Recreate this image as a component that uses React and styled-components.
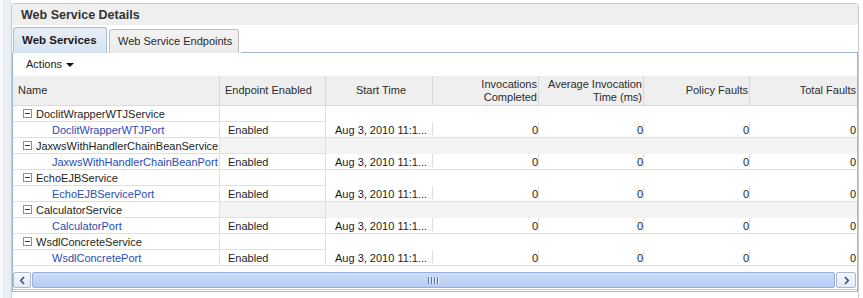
import React from 'react';
import styled, { createGlobalStyle } from 'styled-components';

const Global = createGlobalStyle`
  *, *::before, *::after { box-sizing: border-box; }
  html, body { margin: 0; padding: 0; background: #fff; }
  body {
    font-family: "Liberation Sans", Arial, sans-serif;
    font-size: 11px;
    color: #1d1d1d;
  }
  #root { height: 298px; }
`;

const dots = `repeating-conic-gradient(#ebebeb 0 25%, #f3f3f3 0 50%) 0 0 / 2px 2px`;
const bandDots = `repeating-conic-gradient(#efefef 0 25%, #f8f8f8 0 50%) 0 0 / 2px 2px`;

const Page = styled.div`
  display: flex;
  width: 863px;
  height: 298px;
  overflow: hidden;
`;

const SideStrip = styled.div`
  flex: none;
  width: 11px;
  border-left: 3px solid #f7f8fb;
  background: #e9edf4;
`;

const Panel = styled.div`
  flex: none;
  width: 848px;
  margin-top: 3px;
  display: flex;
  flex-direction: column;
  border: 1px solid #c9c9c9;
  border-bottom: none;
  border-radius: 4px 4px 0 0;
`;

const PanelHeader = styled.div`
  height: 21px;
  padding-left: 9px;
  display: flex;
  align-items: center;
  background: ${dots};
  border-radius: 3px 3px 0 0;
  font-size: 12.5px;
  font-weight: bold;
  color: #333;
`;

const TabBar = styled.div`
  margin-top: 2px;
  height: 26px;
  display: flex;
  align-items: flex-end;
  padding-left: 1px;
  gap: 2px;
`;

const Tab = styled.div`
  height: ${(p) => (p.$active ? 26 : 24)}px;
  width: ${(p) => p.$w}px;
  display: flex;
  align-items: center;
  padding-left: 8px;
  padding-bottom: 1px;
  border: 1px solid ${(p) => (p.$active ? '#a6bdd7' : '#bfbfbf')};
  border-bottom: none;
  border-radius: 3px 3px 0 0;
  background: ${(p) =>
    p.$active
      ? 'linear-gradient(#e8eff8, #d6e3f1)'
      : 'linear-gradient(#f3f3f3, #ebebeb)'};
  font-size: ${(p) => (p.$active ? '11.5px' : '11px')};
  font-weight: ${(p) => (p.$active ? 'bold' : 'normal')};
  color: ${(p) => (p.$active ? '#1a1a1a' : '#2a2a2a')};
  white-space: nowrap;
`;

const TabFiller = styled.div`
  flex: 1;
  height: 1px;
  background: #9fb7d0;
`;

const TabBody = styled.div`
  display: flex;
  flex-direction: column;
  border: 1px solid #9fb7d0;
  border-top: none;
`;

const Toolbar = styled.div`
  height: 23px;
  display: flex;
  align-items: center;
  padding-left: 13px;
  padding-bottom: 2px;
  gap: 4px;
  color: #1d1d1d;
`;

const Caret = styled.span`
  width: 0;
  height: 0;
  margin-top: 3px;
  border-left: 4px solid transparent;
  border-right: 4px solid transparent;
  border-top: 4px solid #111;
`;

const COLS = '207px 106px 107px 106px 105px 106px 1fr';

const HeaderRow = styled.div`
  display: grid;
  grid-template-columns: ${COLS};
  height: 30px;
  background: ${dots};
  border-bottom: 1px solid #dadada;
`;

const HeadCell = styled.div`
  display: flex;
  align-items: center;
  justify-content: ${(p) =>
    p.$align === 'right' ? 'flex-end' : p.$align === 'center' ? 'center' : 'flex-start'};
  text-align: ${(p) => p.$align || 'left'};
  padding: 0 1px 0 5px;
  border-right: ${(p) => (p.$last ? 'none' : '1px solid #d8d8d8')};
  line-height: 13px;
  color: #2b2b2b;
`;

const Row = styled.div`
  display: grid;
  grid-template-columns: ${COLS};
  height: 16px;
`;

const Cell = styled.div`
  display: flex;
  align-items: center;
  justify-content: ${(p) => (p.$align === 'right' ? 'flex-end' : 'flex-start')};
  padding: 0 ${(p) => (p.$align === 'right' ? 1 : 0)}px 0 ${(p) => p.$pl || 0}px;
  white-space: nowrap;
  overflow: hidden;
  color: ${(p) => (p.$link ? '#2a4db4' : '#1d1d1d')};
  background: ${(p) => (p.$band ? bandDots : '#fff')};
  border-right: ${(p) => (p.$vline ? '1px solid #e0e0e0' : 'none')};
  border-bottom: ${(p) => (p.$hline ? '1px solid #e0e0e0' : '1px solid transparent')};
  ${(p) =>
    p.$tick
      ? `background-image: linear-gradient(#dedede, #dedede);
         background-repeat: no-repeat;
         background-size: 1px 13px;
         background-position: right top;`
      : ''}
`;

const NameWrap = styled.span`
  display: flex;
  align-items: center;
  gap: 4px;
`;

const ScrollArea = styled.div`
  padding-top: 6px;
  padding-bottom: 1px;
  border-bottom: 1px solid #b3c6e2;
  margin-bottom: 1px;
`;

const ScrollBar = styled.div`
  height: 16px;
  display: flex;
  gap: 1px;
  padding: 0 1px 0 0;
`;

const ScrollButton = styled.div`
  flex: none;
  width: ${(p) => p.$w}px;
  height: 16px;
  display: flex;
  align-items: center;
  justify-content: center;
  border: 1px solid #a8b8d5;
  border-radius: 2px;
  background: linear-gradient(#f6f8fd, #e3eaf7);
`;

const Thumb = styled.div`
  flex: 1;
  height: 16px;
  display: flex;
  align-items: center;
  justify-content: center;
  gap: 1px;
  border: 1px solid #95afdf;
  border-radius: 2px;
  background: linear-gradient(#cddcf9, #b6cdf5);
`;

const Grip = styled.span`
  width: 1px;
  height: 7px;
  background: #5f79ac;
  box-shadow: 1px 0 0 #e8effc;
  margin-right: 1px;
`;

const MinusBox = () => (
  <svg width="9" height="9" viewBox="0 0 9 9">
    <rect x="0.5" y="0.5" width="8" height="8" fill="#fff" stroke="#8e8e8e" />
    <line x1="2" y1="4.5" x2="7" y2="4.5" stroke="#333" />
  </svg>
);

const Chevron = ({ dir }) => (
  <svg width="7" height="9" viewBox="0 0 7 9">
    <polyline
      points={dir === 'left' ? '5,1 1.8,4.5 5,8' : '2,1 5.2,4.5 2,8'}
      fill="none"
      stroke="#3f5a8c"
      strokeWidth="1.8"
    />
  </svg>
);

const services = [
  ['DoclitWrapperWTJService', 'DoclitWrapperWTJPort'],
  ['JaxwsWithHandlerChainBeanService', 'JaxwsWithHandlerChainBeanPort'],
  ['EchoEJBService', 'EchoEJBServicePort'],
  ['CalculatorService', 'CalculatorPort'],
  ['WsdlConcreteService', 'WsdlConcretePort'],
];

export default function App() {
  return (
    <>
      <Global />
      <Page>
        <SideStrip />
        <Panel>
          <PanelHeader>Web Service Details</PanelHeader>
          <TabBar>
            <Tab $active $w={94}>Web Services</Tab>
            <Tab $w={130}>Web Service Endpoints</Tab>
            <TabFiller />
          </TabBar>
          <TabBody>
            <Toolbar>
              Actions <Caret />
            </Toolbar>
            <HeaderRow>
              <HeadCell>Name</HeadCell>
              <HeadCell>Endpoint Enabled</HeadCell>
              <HeadCell $align="center">Start Time</HeadCell>
              <HeadCell $align="right">Invocations<br />Completed</HeadCell>
              <HeadCell $align="right">Average Invocation<br />Time (ms)</HeadCell>
              <HeadCell $align="right">Policy Faults</HeadCell>
              <HeadCell $align="right" $last>Total Faults</HeadCell>
            </HeaderRow>
            {services.map(([svc, port], i) => {
              const band = i % 2 === 1;
              return (
                <React.Fragment key={svc}>
                  <Row>
                    <Cell $pl={10} $vline $hline>
                      <NameWrap>
                        <MinusBox />
                        {svc}
                      </NameWrap>
                    </Cell>
                    <Cell $vline $hline $band={band} />
                    <Cell $band={band} />
                    <Cell $band={band} />
                    <Cell $band={band} />
                    <Cell $band={band} />
                    <Cell $band={band} />
                  </Row>
                  <Row>
                    <Cell $pl={39} $link $vline $hline>{port}</Cell>
                    <Cell $pl={8} $vline $hline>Enabled</Cell>
                    <Cell $pl={9} $hline $tick>Aug 3, 2010 11:1...</Cell>
                    <Cell $align="right" $hline $tick>0</Cell>
                    <Cell $align="right" $hline $tick>0</Cell>
                    <Cell $align="right" $hline $tick>0</Cell>
                    <Cell $align="right" $hline>0</Cell>
                  </Row>
                </React.Fragment>
              );
            })}
            <ScrollArea>
              <ScrollBar>
                <ScrollButton $w={18}><Chevron dir="left" /></ScrollButton>
                <Thumb>
                  <Grip /><Grip /><Grip /><Grip />
                </Thumb>
                <ScrollButton $w={20}><Chevron dir="right" /></ScrollButton>
              </ScrollBar>
            </ScrollArea>
          </TabBody>
        </Panel>
      </Page>
    </>
  );
}
